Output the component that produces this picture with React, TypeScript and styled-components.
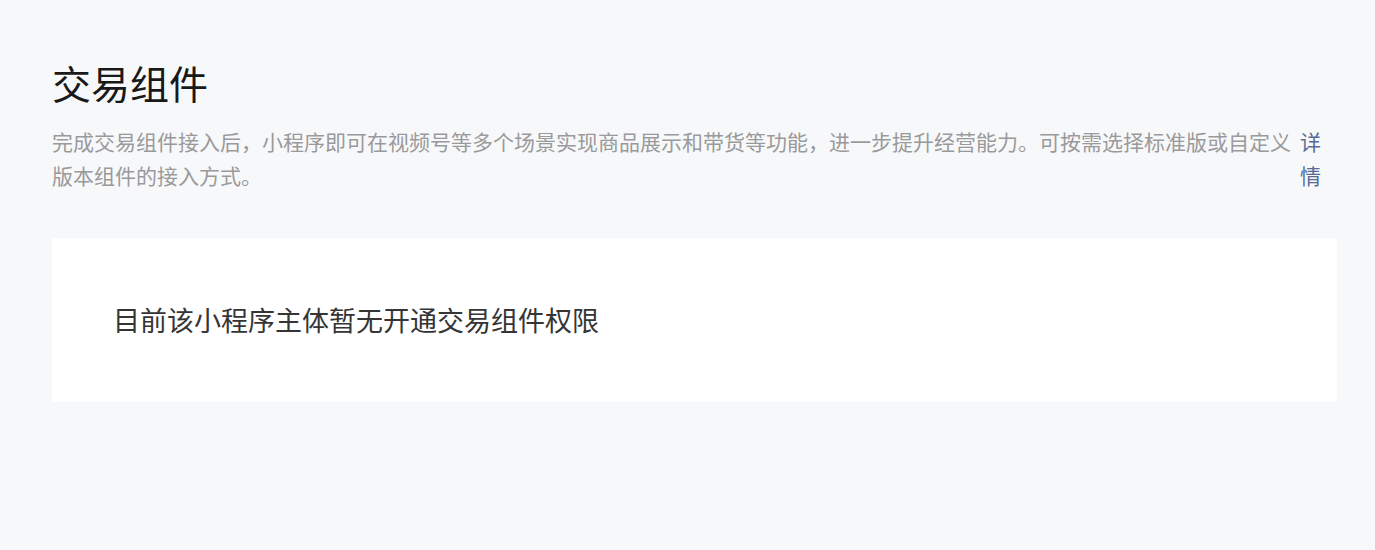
import React from "react";
import styled, { createGlobalStyle } from "styled-components";

const Global = createGlobalStyle`
  html, body { margin: 0; padding: 0; background: #f7f8fa; }
  body { font-family: "Noto Sans CJK SC", "Noto Sans", sans-serif; }
`;

const Page = styled.div`
  padding: 52px 38px 0 52px;
  min-height: 550px;
  box-sizing: border-box;
  background: #f7f8fa;
`;

const Title = styled.h1`
  margin: 0;
  font-size: 39px;
  font-weight: 400;
  line-height: 60px;
  color: #191919;
`;

const DescRow = styled.div`
  display: flex;
  align-items: flex-start;
  margin-top: 12px;
  padding-right: 16px;
  font-size: 21px;
  line-height: 34px;
`;

const DescText = styled.p`
  margin: 0;
  flex: 1;
  color: #9a9a9a;
`;

const DetailLink = styled.a`
  flex: 0 0 21px;
  margin-left: 8px;
  color: #576b95;
  text-decoration: none;
  cursor: pointer;
`;

const Card = styled.div`
  margin-top: 46px;
  background: #ffffff;
  border-radius: 2px;
  padding: 62px 61px;
`;

const CardText = styled.p`
  margin: 0;
  font-size: 27px;
  line-height: 40px;
  color: #353535;
`;

export default function App() {
  return (
    <>
      <Global />
      <Page>
        <Title>交易组件</Title>
        <DescRow>
          <DescText>
            完成交易组件接入后，小程序即可在视频号等多个场景实现商品展示和带货等功能，进一步提升经营能力。可按需选择标准版或自定义版本组件的接入方式。
          </DescText>
          <DetailLink>详情</DetailLink>
        </DescRow>
        <Card>
          <CardText>目前该小程序主体暂无开通交易组件权限</CardText>
        </Card>
      </Page>
    </>
  );
}
